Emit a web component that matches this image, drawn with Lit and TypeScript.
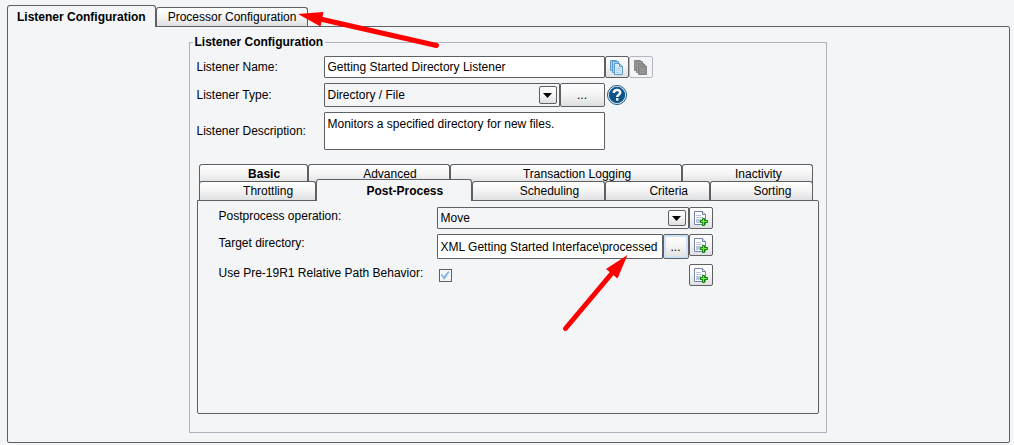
import { LitElement, html, css, svg } from "lit";
import { customElement, property } from "lit/decorators.js";

const copyIcon = (dark: string, mid: string, light: string) => html`
  <svg width="15" height="17" viewBox="0 0 15 17" aria-hidden="true">
    <path d="M1.500 1.500h6v10h-6z" fill=${mid} stroke=${dark} />
    <path d="M3.500 2.500h6v11h-6z" fill=${mid} stroke=${dark} />
    <path d="M5.500 4.500h5l3 3v8h-8z" fill=${light} stroke=${dark} />
    <path d="M10.500 4.500v3h3" fill="none" stroke=${dark} />
    <path d="M7 9.500h5M7 11.500h5M7 13.500h4" stroke=${mid} />
  </svg>`;

const addPageIcon = html`
  <svg width="14" height="15" viewBox="0 0 14 15" aria-hidden="true">
    <path d="M.5.5h8l3 3v10H.5z" fill="#fff" stroke="#7484ae" />
    <path d="M8.500.5v3h3" fill="#dde4f3" stroke="#7484ae" />
    <path d="M2 4.500h5M2 6.500h7" stroke="#b9c4dd" />
    <path d="M2 8h5v4H2z" fill="#b9c4dd" />
    <path d="M8.500 7.500h2v2h3v2h-3v3h-2v-3h-2v-2h2z" fill="#6cf03c" stroke="#0b7d0b" />
  </svg>`;

const helpIcon = html`
  <svg width="20" height="20" viewBox="0 0 20 20" aria-hidden="true">
    <circle cx="10" cy="10" r="9.500" fill="#fff" stroke="#0f5488" />
    <circle cx="10" cy="10" r="8.200" fill="#0f5488" />
    <path d="M6.800 8C6.800 4 13.200 4 13.200 7.500C13.200 9.800 10.200 9.600 10.200 12" fill="none" stroke="#fff" stroke-width="2.400" />
    <rect x="9" y="13.200" width="2.500" height="2.400" fill="#fff" />
  </svg>`;

const controls = css`
  * { box-sizing: border-box; }
  button, input, select, textarea {
    font: inherit;
    color: inherit;
    margin: 0;
  }
  .field {
    width: 100%;
    min-width: 0;
    border: 1px solid #5f6063;
    border-radius: 1px;
    background: #fff;
    padding: 0 3px;
    outline: none;
    resize: none;
    display: block;
  }
  .btn {
    display: flex;
    align-items: center;
    justify-content: center;
    padding: 0;
    border: 1px solid #5f6063;
    border-radius: 2px;
    background: linear-gradient(#ffffff, #f4f4f5 50%, #dedfe0);
  }
  .btn:disabled { border-color: #b4b6c4; background: #f4f5f7; }
  .icon { width: 24px; height: 22px; }
`;

@customElement("combo-box")
class ComboBox extends LitElement {
  @property() label = "";
  @property() value = "";
  static styles = [controls, css`
    :host { display: block; position: relative; }
    .select {
      appearance: none;
      height: 100%;
      background: #f4f5f7;
    }
    .arrow {
      position: absolute;
      right: 3px;
      top: 3px;
      bottom: 3px;
      width: 18px;
      pointer-events: none;
    }
  `];
  render() {
    return html`
      <select class="field select" aria-label=${this.label}><option>${this.value}</option></select>
      <span class="btn arrow">
        <svg width="9" height="5" viewBox="0 0 9 5" aria-hidden="true"><path d="M0 0h9L4.500 5z" fill="#000" /></svg>
      </span>`;
  }
}

@customElement("app-root")
class AppRoot extends LitElement {
  static styles = [controls, css`
    :host {
      display: flex;
      flex-direction: column;
      position: relative;
      box-sizing: border-box;
      min-height: 100vh;
      padding: 5px 4px 2px 7px;
      background: #f4f5f7;
      color: #000;
      font: 12px/16px "Liberation Sans", Arial, sans-serif;
    }
    .tabs { display: flex; align-items: flex-end; }
    .tab {
      border: 1px solid #5f6063;
      border-bottom: 0;
      border-radius: 3px 3px 0 0;
      background: linear-gradient(#ffffff, #f4f4f5 50%, #dfe0e1);
      padding: 0 9px;
      height: 19px;
      white-space: nowrap;
    }
    .strong { font-weight: bold; }
    .main { padding: 0 11px; }
    .tab.selected {
      position: relative;
      z-index: 1;
      height: 22px;
      margin-bottom: -1px;
      background: #f4f5f7;
      font-weight: bold;
    }
    .panel {
      flex: 1;
      border: 1px solid #5f6063;
      border-radius: 0 2px 2px 2px;
    }
    .outer { padding: 8px 18px 9px 16px; }
    .group {
      width: 100%;
      max-width: 638px;
      min-width: 0;
      margin: 0 auto;
      border: 1px solid #b0b2bf;
      padding: 7px 7px 18px;
    }
    .legend {
      padding: 0 2px;
      margin-left: -4px;
      font-weight: bold;
      line-height: 14px;
    }
    .form {
      display: grid;
      grid-template-columns: 127px 281px auto;
      row-gap: 5px;
      align-items: center;
    }
    .name { height: 22px; }
    .description { height: 38px; padding: 3px; }
    .pair { display: flex; height: 24px; }
    .grow { flex: 1; }
    .browse { width: 45px; }
    .actions { display: flex; }
    .help { border: 0; background: none; padding: 0 2px; display: flex; }
    .inner { margin-top: 14px; }
    .row { padding: 0 6px 0 2px; }
    .row .tab { padding: 0 0 0 22px; }
    .back { margin-bottom: -4px; }
    .details {
      display: grid;
      grid-template-columns: 218px 252px 24px;
      row-gap: 5px;
      align-content: start;
      min-height: 214px;
      padding: 6px 21px;
    }
    .caption { line-height: 18px; }
    .target { height: 25px; }
    .dots { width: 26px; box-shadow: inset 0 0 0 2px #cde2f7; }
    .check {
      appearance: none;
      display: grid;
      place-items: center;
      width: 13px;
      height: 13px;
      margin: 5px 2px;
      border: 1px solid #5f6063;
      background: #f4f5f7;
    }
    .check:checked::before {
      content: "";
      width: 9px;
      height: 9px;
      background: #86b6e6;
      clip-path: polygon(0 40%, 15% 30%, 38% 58%, 85% 0, 100% 12%, 42% 100%);
    }
    .marks {
      position: absolute;
      left: 0;
      top: 0;
      pointer-events: none;
      z-index: 2;
    }
  `];

  private backTabs = [
    { name: "Basic", size: 109, strong: true },
    { name: "Advanced", size: 142 },
    { name: "Transaction Logging", size: 232 },
    { name: "Inactivity", size: 130 },
  ];
  private frontTabs = [
    { name: "Throttling", size: 117 },
    { name: "Post-Process", size: 156, selected: true },
    { name: "Scheduling", size: 133 },
    { name: "Criteria", size: 105 },
    { name: "Sorting", size: 102 },
  ];

  private tab(t: { name: string; size: number; strong?: boolean; selected?: boolean }) {
    return html`<button role="tab" aria-selected=${t.selected ? "true" : "false"}
      class="tab ${t.selected ? "selected" : ""} ${t.strong ? "strong" : ""}"
      style="flex:1 1 ${t.size}px">${t.name}</button>`;
  }

  private arrow(tail: number[], neck: number[], head: string) {
    return svg`<line x1=${tail[0]} y1=${tail[1]} x2=${neck[0]} y2=${neck[1]} stroke="#fe0000" stroke-width="5" stroke-linecap="round" />
      <polygon points=${head} fill="#fe0000" />`;
  }

  render() {
    return html`
      <div class="tabs" role="tablist">
        <button class="tab selected" role="tab" aria-selected="true">Listener Configuration</button>
        <button class="tab main" role="tab" aria-selected="false">Processor Configuration</button>
      </div>
      <main class="panel outer">
        <fieldset class="group">
          <legend class="legend">Listener Configuration</legend>
          <div class="form">
            <label for="name">Listener Name:</label>
            <input id="name" class="field name" value="Getting Started Directory Listener" />
            <div class="actions">
              <button class="btn icon" aria-label="Copy">${copyIcon("#5f9ccf", "#a9d0ef", "#d6e9f8")}</button>
              <button class="btn icon" aria-label="Paste" disabled>${copyIcon("#868686", "#9b9b9b", "#8e8e8e")}</button>
            </div>
            <span>Listener Type:</span>
            <div class="pair">
              <combo-box class="grow" label="Listener Type" value="Directory / File"></combo-box>
              <button class="btn browse">...</button>
            </div>
            <button class="help" aria-label="Help">${helpIcon}</button>
            <label for="description">Listener Description:</label>
            <textarea id="description" class="field description" .value=${"Monitors a specified directory for new files."}></textarea>
          </div>
          <div class="inner">
            <div class="tabs row back" role="tablist">${this.backTabs.map((t) => this.tab(t))}</div>
            <div class="tabs row" role="tablist">${this.frontTabs.map((t) => this.tab(t))}</div>
            <section class="panel details">
              <span class="caption">Postprocess operation:</span>
              <combo-box label="Postprocess operation" value="Move"></combo-box>
              <button class="btn icon" aria-label="Add">${addPageIcon}</button>
              <label class="caption" for="target">Target directory:</label>
              <div class="pair target">
                <input id="target" class="field grow" value="XML Getting Started Interface\\processed" />
                <button class="btn dots">...</button>
              </div>
              <button class="btn icon" aria-label="Add">${addPageIcon}</button>
              <label class="caption" for="relative">Use Pre-19R1 Relative Path Behavior:</label>
              <input id="relative" class="check" type="checkbox" checked />
              <button class="btn icon" aria-label="Add">${addPageIcon}</button>
            </section>
          </div>
        </fieldset>
      </main>
      <svg class="marks" width="640" height="340" viewBox="0 0 640 340" aria-hidden="true">
        ${this.arrow([436.5, 45.5], [318, 18.5], "298,14 323.500,12 320.500,26.500")}
        ${this.arrow([565.5, 328.5], [613, 272], "627.500,255 606,269 617.500,278.500")}
      </svg>`;
  }
}
